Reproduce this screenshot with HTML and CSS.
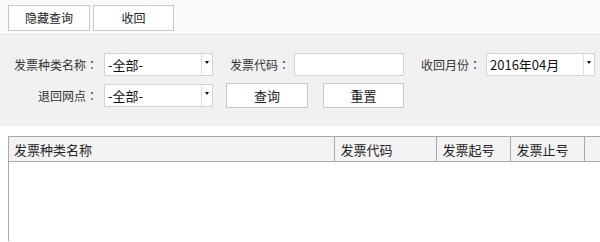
FILE: index.html
```html
<!doctype html>
<html>
<head>
<meta charset="utf-8">
<title>发票收回</title>
<link rel="stylesheet" href="styles.css">
</head>

<body>
<div class="toolbar">
    <button class="btn btn-hide">隐藏查询</button>
    <button class="btn btn-back">收回</button>
</div>

<div class="search">
    <div class="row">
        <label class="lbl lbl-first">发票种类名称<span class="colon">：</span></label>
        <div class="combo"><span class="combo-text">-全部-</span><span class="combo-arrow"><i></i></span></div>
        <label class="lbl lbl-code">发票代码<span class="colon">：</span></label>
        <input class="txt" type="text">
        <label class="lbl lbl-month">收回月份<span class="colon">：</span></label>
        <div class="combo combo-month"><span class="combo-text">2016年04月</span><span class="combo-arrow"><i></i></span></div>
    </div>
    <div class="row row-2">
        <label class="lbl lbl-first">退回网点<span class="colon">：</span></label>
        <div class="combo"><span class="combo-text">-全部-</span><span class="combo-arrow"><i></i></span></div>
        <button class="btn btn-query">查询</button>
        <button class="btn btn-reset">重置</button>
    </div>
</div>

<div class="grid">
    <table class="grid-head">
        <colgroup>
            <col style="width:325px">
            <col style="width:102px">
            <col style="width:74px">
            <col style="width:74px">
            <col>
        </colgroup>
        <tr>
            <th>发票种类名称</th>
            <th>发票代码</th>
            <th>发票起号</th>
            <th>发票止号</th>
            <th></th>
        </tr>
    </table>
</div>
</body>
</html>
```

FILE: styles.css
```css
html, body { margin: 0; padding: 0; overflow: hidden; }
body { font-family: "Microsoft YaHei", "Noto Sans CJK SC", sans-serif; font-size: 12px; color: #333; background: #fff; }

.toolbar { height: 35px; box-sizing: border-box; padding: 5px 8px 0; background: #fafafa; border-bottom: 1px solid #e3e3e3; display: flex; }
.btn { font-family: inherit; font-size: 12px; color: #222; background: #fff; border: 1px solid #c9c9c9; border-radius: 0; padding: 0; margin: 0; height: 26px; line-height: 24px; cursor: pointer; }
.btn-hide { width: 82px; }
.btn-back { width: 81px; margin-left: 3px; }

.search { background: #f1f1f1; padding: 18px 0 18px; }
.row { display: flex; align-items: center; height: 23px; }
.row-2 { margin-top: 7px; height: 25px; }
.lbl { display: block; text-align: right; white-space: nowrap; color: #333; }
.colon { font-family: "Noto Sans CJK TC", "Noto Sans CJK SC", sans-serif; }
.lbl-first { width: 98px; margin-right: 6px; }
.lbl-code { width: 62px; margin-left: 17px; margin-right: 2px; text-align: left; }
.lbl-month { width: 62px; margin-left: 17px; margin-right: 3px; text-align: left; }

.combo { width: 109px; height: 23px; box-sizing: border-box; border: 1px solid #d3d3d3; background: #fff; display: flex; }
.combo-month { width: 109px; }
.combo-text { flex: 1; padding-left: 3px; line-height: 21px; font-size: 13px; color: #111; white-space: nowrap; }
.combo-arrow { width: 11px; border-left: 1px solid #e0e0e0; display: flex; align-items: center; justify-content: center; padding-bottom: 4px; box-sizing: border-box; }
.combo-arrow i { width: 0; height: 0; border-left: 2.5px solid transparent; border-right: 2.5px solid transparent; border-top: 3px solid #111; }

.txt { width: 110px; height: 23px; box-sizing: border-box; border: 1px solid #d3d3d3; background: #fff; margin: 0; padding: 0 3px; outline: none; }

.btn-query { width: 82px; height: 25px; margin-left: 13px; font-size: 13px; }
.btn-reset { width: 81px; height: 25px; margin-left: 15px; font-size: 13px; }

.grid { margin: 10px 0 0 8px; height: 105px; box-sizing: border-box; border-left: 1px solid #a9a9a9; border-top: 1px solid #a9a9a9; background: #fff; overflow: hidden; }
.grid-head { border-collapse: collapse; table-layout: fixed; width: 100%; }
.grid-head th { height: 24px; padding: 0 0 0 6px; text-align: left; font-weight: normal; font-size: 13px; color: #222; background: #f3f3f3; border-right: 1px solid #aaa; border-bottom: 1px solid #aaa; white-space: nowrap; }
.grid-head th:first-child { padding-left: 5px; }
.grid-head th:last-child { border-right: none; }
```
